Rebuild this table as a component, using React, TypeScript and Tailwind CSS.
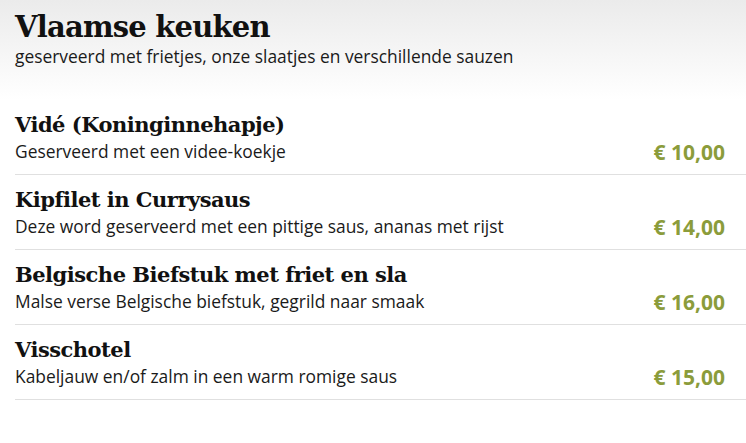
import React from "react";

const items = [
  { t: "Vidé (Koninginnehapje)", d: "Geserveerd met een videe-koekje", p: "€ 10,00" },
  { t: "Kipfilet in Currysaus", d: "Deze word geserveerd met een pittige saus, ananas met rijst", p: "€ 14,00" },
  { t: "Belgische Biefstuk met friet en sla", d: "Malse verse Belgische biefstuk, gegrild naar smaak", p: "€ 16,00" },
  { t: "Visschotel", d: "Kabeljauw en/of zalm in een warm romige saus", p: "€ 15,00" },
];

export default function App() {
  return (
    <div className="w-[746px] h-[443px] overflow-hidden bg-white">
      <div className="bg-gradient-to-b from-[#ebebeb] to-white h-[100px] -mb-[100px]" />
      <div className="relative pl-[15px] pt-[10px]">
        <h1 className="font-['DejaVu_Serif',serif] font-bold text-[29px] leading-[34px] text-[#111] tracking-[-0.8px]">
          Vlaamse keuken
        </h1>
        <p className="font-['Open_Sans',sans-serif] text-[17.4px] leading-[24px] text-[#1a1a1a]">
          geserveerd met frietjes, onze slaatjes en verschillende sauzen
        </p>
        <div className="mt-[32px]">
          {items.map((it, i) => (
            <div key={i} className="flex items-end border-b border-[#e0e0e0] pt-[11px] pb-[11px]">
              <div className="flex-1">
                <div className="font-['DejaVu_Serif',serif] font-bold text-[21px] leading-[28px] text-[#111] tracking-[-0.5px]">
                  {it.t}
                </div>
                <div className="font-['Open_Sans',sans-serif] text-[17.4px] leading-[24px] text-[#1a1a1a]">
                  {it.d}
                </div>
              </div>
              <div className="font-['Open_Sans',sans-serif] font-bold text-[21px] leading-[26px] text-[#8b9c3b] pr-[21px] -mb-[2px]">
                {it.p}
              </div>
            </div>
          ))}
        </div>
      </div>
    </div>
  );
}
